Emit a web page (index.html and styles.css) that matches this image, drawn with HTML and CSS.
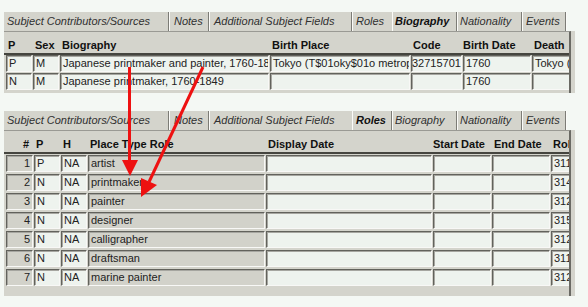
FILE: index.html
```html
<!DOCTYPE html>
<html lang="en">
<head>
  <meta charset="UTF-8" />
  <title>Subject Roles and Biography</title>
  <link rel="stylesheet" href="styles.css">
</head>
<body>
  <div class="page">

    <section class="panel panel-bio">
      <div class="tabs">
        <span class="tab tab-sources">Subject Contributors/Sources</span>
        <span class="tab tab-notes">Notes</span>
        <span class="tab tab-fields">Additional Subject Fields</span>
        <span class="tab tab-roles before-active">Roles</span>
        <span class="tab tab-bio active">Biography</span>
        <span class="tab tab-nat">Nationality</span>
        <span class="tab tab-events">Events</span>
      </div>
      <div class="pane">
        <div class="clip">
          <div class="head cols-bio">
            <span>P</span><span>Sex</span><span>Biography</span><span>Birth Place</span><span>Code</span><span class="tight">Birth Date</span><span>Death</span>
          </div>
          <div class="rule"></div>
          <div class="rows rows-bio">
            <div class="cols-bio">
              <span class="cell">P</span><span class="cell">M</span><span class="cell">Japanese printmaker and painter, 1760-1849</span><span class="cell">Tokyo (T$01oky$01o metropolis)</span><span class="cell tight">32715701</span><span class="cell">1760</span><span class="cell">Tokyo (T$01oky$01o metropolis)</span>
            </div>
            <div class="cols-bio">
              <span class="cell">N</span><span class="cell">M</span><span class="cell">Japanese printmaker, 1760-1849</span><span class="cell"></span><span class="cell"></span><span class="cell">1760</span><span class="cell"></span>
            </div>
          </div>
        </div>
      </div>
    </section>

    <section class="panel panel-roles">
      <div class="tabs">
        <span class="tab tab-sources">Subject Contributors/Sources</span>
        <span class="tab tab-notes">Notes</span>
        <span class="tab tab-fields before-active">Additional Subject Fields</span>
        <span class="tab tab-roles active">Roles</span>
        <span class="tab tab-bio">Biography</span>
        <span class="tab tab-nat">Nationality</span>
        <span class="tab tab-events">Events</span>
      </div>
      <div class="pane">
        <div class="clip">
          <div class="head cols-role">
            <span class="num">#</span><span>P</span><span>H</span><span>Place Type Role</span><span>Display Date</span><span class="tight">Start Date</span><span>End Date</span><span>Role ID</span>
          </div>
          <div class="rule"></div>
          <div class="rows rows-role">
            <div class="cols-role"><span class="cell off num">1</span><span class="cell">P</span><span class="cell">NA</span><span class="cell off">artist</span><span class="cell"></span><span class="cell"></span><span class="cell"></span><span class="cell">311</span></div>
            <div class="cols-role"><span class="cell off num">2</span><span class="cell">N</span><span class="cell">NA</span><span class="cell off">printmaker</span><span class="cell"></span><span class="cell"></span><span class="cell"></span><span class="cell">314</span></div>
            <div class="cols-role"><span class="cell off num">3</span><span class="cell">N</span><span class="cell">NA</span><span class="cell off">painter</span><span class="cell"></span><span class="cell"></span><span class="cell"></span><span class="cell">312</span></div>
            <div class="cols-role"><span class="cell off num">4</span><span class="cell">N</span><span class="cell">NA</span><span class="cell off">designer</span><span class="cell"></span><span class="cell"></span><span class="cell"></span><span class="cell">315</span></div>
            <div class="cols-role"><span class="cell off num">5</span><span class="cell">N</span><span class="cell">NA</span><span class="cell off">calligrapher</span><span class="cell"></span><span class="cell"></span><span class="cell"></span><span class="cell">312</span></div>
            <div class="cols-role"><span class="cell off num">6</span><span class="cell">N</span><span class="cell">NA</span><span class="cell off">draftsman</span><span class="cell"></span><span class="cell"></span><span class="cell"></span><span class="cell">311</span></div>
            <div class="cols-role"><span class="cell off num">7</span><span class="cell">N</span><span class="cell">NA</span><span class="cell off">marine painter</span><span class="cell"></span><span class="cell"></span><span class="cell"></span><span class="cell">312</span></div>
          </div>
        </div>
      </div>
    </section>

    <!-- annotation arrows drawn over the screenshot -->
    <svg class="arrows" width="588" height="307" viewBox="0 0 588 307">
      <line x1="129.5" y1="67" x2="129.5" y2="162" stroke="#ee1111" stroke-width="3"/>
      <polygon points="122,160 138,160 130,176" fill="#ee1111"/>
      <line x1="203" y1="67" x2="149" y2="182" stroke="#ee1111" stroke-width="3"/>
      <polygon points="157,185 141,178 141,197" fill="#ee1111"/>
    </svg>
  </div>
</body>
</html>
```

FILE: styles.css
```css
body {
  margin: 0;
  background: #f4f8f4;
  font-family: 'Liberation Sans', Arial, Helvetica, sans-serif;
  font-size: 11px;
  color: #1c1c1c;
}
.page {
  position: relative;
  width: 588px;
  height: 307px;
  overflow: hidden;
}
.panel {
  margin-left: 4px;
  width: 571px;
}
.panel-bio {
  padding-top: 12px;
}
.panel-roles {
  margin-top: 18px;
}

/* tab strip */
.tabs {
  display: flex;
  width: 562px;
  height: 19px;
  background: #d4d4cc;
}
.tab {
  box-sizing: border-box;
  height: 19px;
  line-height: 19px;
  padding-left: 4px;
  font-style: italic;
  color: #303030;
  white-space: nowrap;
  overflow: hidden;
  border-right: 1px solid #7c7c76;
  box-shadow: 1px 0 0 #fbfbf8;
}
.tab.before-active {
  border-right-color: transparent;
  box-shadow: none;
}
.tab.active {
  font-weight: bold;
  color: #111;
  box-shadow: inset 1px 0 0 #fbfbf8, 1px 0 0 #fbfbf8;
}
.tab-sources { width: 165px; padding-left: 3px; }
.tab-notes { width: 40px; padding-left: 5px; }
.tab-fields { width: 143px; padding-left: 5px; }
.tab-roles { width: 40px; }
.tab-bio { width: 65px; padding-left: 3px; }
.tab-nat { width: 65px; padding-left: 3px; }
.tab-events { width: 44px; }

/* content pane */
.pane {
  background: #d4d4cc;
  padding-right: 4px;
}
.clip {
  overflow: hidden;
  border-top: 1px solid #9a9a94;
  border-right: 2px solid #6a6a64;
  padding-left: 2px;
}
.panel-bio .clip {
  padding-bottom: 3px;
}
.panel-roles .clip {
  padding-bottom: 10px;
}

.cols-bio {
  display: grid;
  grid-template-columns: 26px 26px 209px 140px 51px 68px 80px;
  column-gap: 1px;
}
.cols-role {
  display: grid;
  grid-template-columns: 27px 26px 26px 177px 166px 58px 58px 40px;
  column-gap: 1px;
}

.head {
  margin-top: 5px;
  height: 16px;
  line-height: 16px;
  font-weight: bold;
  color: #111;
  white-space: nowrap;
}
.head span {
  padding-left: 2px;
  overflow: hidden;
}
.head .num {
  text-align: right;
  padding-right: 4px;
}
.head .tight {
  padding-left: 0;
}
.rule {
  margin-left: -2px;
  height: 2px;
  background: #45453f;
}

.rows {
  display: flex;
  flex-direction: column;
}
.rows-bio {
  gap: 1px;
}
.rows-role {
  margin-top: 1px;
  gap: 2px;
}

.cell {
  box-sizing: border-box;
  height: 17px;
  line-height: 15px;
  padding: 0 1px 0 2px;
  background: #eef3ee;
  border: 1px solid;
  border-color: #62625c #f8f8f6 #f8f8f6 #62625c;
  box-shadow: inset 1px 1px 0 #a6a6a0;
  white-space: nowrap;
  overflow: hidden;
  color: #222;
}
.cell.tight {
  padding: 0;
}
.cell.off {
  background: #d2d2ca;
}
.cell.num {
  text-align: right;
  padding-right: 2px;
}

.arrows {
  position: absolute;
  left: 0;
  top: 0;
  pointer-events: none;
}
```
